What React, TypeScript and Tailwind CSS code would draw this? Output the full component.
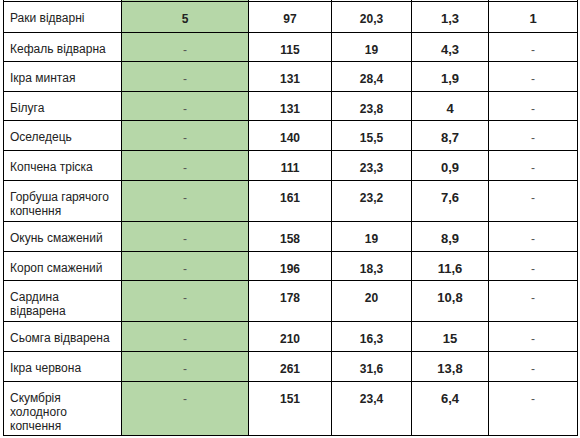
import React from "react";

type Row = {
  name: string[];
  g: string;
  kcal: string;
  protein: string;
  fat: string;
  carbs: string;
  h: string;
};

const ROWS: Row[] = [
  { name: ["Раки відварні"], g: "5", kcal: "97", protein: "20,3", fat: "1,3", carbs: "1", h: "h-[31px]" },
  { name: ["Кефаль відварна"], g: "-", kcal: "115", protein: "19", fat: "4,3", carbs: "-", h: "h-[29px]" },
  { name: ["Ікра минтая"], g: "-", kcal: "131", protein: "28,4", fat: "1,9", carbs: "-", h: "h-[30px]" },
  { name: ["Білуга"], g: "-", kcal: "131", protein: "23,8", fat: "4", carbs: "-", h: "h-[29px]" },
  { name: ["Оселедець"], g: "-", kcal: "140", protein: "15,5", fat: "8,7", carbs: "-", h: "h-[30px]" },
  { name: ["Копчена тріска"], g: "-", kcal: "111", protein: "23,3", fat: "0,9", carbs: "-", h: "h-[30px]" },
  { name: ["Горбуша гарячого", "копчення"], g: "-", kcal: "161", protein: "23,2", fat: "7,6", carbs: "-", h: "h-[41px]" },
  { name: ["Окунь смажений"], g: "-", kcal: "158", protein: "19", fat: "8,9", carbs: "-", h: "h-[30px]" },
  { name: ["Короп смажений"], g: "-", kcal: "196", protein: "18,3", fat: "11,6", carbs: "-", h: "h-[29px]" },
  { name: ["Сардина", "відварена"], g: "-", kcal: "178", protein: "20", fat: "10,8", carbs: "-", h: "h-[41px]" },
  { name: ["Сьомга відварена"], g: "-", kcal: "210", protein: "16,3", fat: "15", carbs: "-", h: "h-[30px]" },
  { name: ["Ікра червона"], g: "-", kcal: "261", protein: "31,6", fat: "13,8", carbs: "-", h: "h-[30px]" },
  { name: ["Скумбрія", "холодного", "копчення"], g: "-", kcal: "151", protein: "23,4", fat: "6,4", carbs: "-", h: "h-[55px]" },
];

const GRID = "grid grid-cols-[118px_127px_83px_80px_77px_90px]";
const CELL = "border-l border-black pt-[9px] leading-[13px]";

function Value({ value, big }: { value: string; big?: boolean }) {
  if (value === "-") {
    return <span className="text-[12px] font-normal text-[#555]">-</span>;
  }
  return <span className={big ? "text-[13px] font-bold" : "text-[12px] font-bold"}>{value}</span>;
}

export default function App() {
  return (
    <div className="bg-white w-[580px] h-[438px] overflow-hidden font-['Liberation_Sans',Arial,sans-serif] text-[#222]">
      <div className="ml-[3px] w-[575px]">
        {/* bottom edge of the cut-off header row */}
        <div className={`${GRID} h-[1px]`}>
          <div className="border-l border-black" />
          <div className="border-l border-black bg-[#b6d7a8]" />
          <div className="border-l border-black" />
          <div className="border-l border-black" />
          <div className="border-l border-black" />
          <div className="border-l border-r border-black" />
        </div>
        {ROWS.map((row, i) => (
          <div
            key={row.name.join(" ")}
            className={`${GRID} ${row.h} border-t border-black ${i === ROWS.length - 1 ? "border-b" : ""}`}
          >
            <div className="border-l border-black pt-[9px] pl-[6px] text-[12px] leading-[14px]">
              {row.name.map((line) => (
                <div key={line}>{line}</div>
              ))}
            </div>
            <div className={`${CELL} bg-[#b6d7a8] text-center`}>
              <Value value={row.g} />
            </div>
            <div className={`${CELL} text-center`}>
              <Value value={row.kcal} />
            </div>
            <div className={`${CELL} text-center`}>
              <Value value={row.protein} />
            </div>
            <div className={`${CELL} text-center`}>
              <Value value={row.fat} big />
            </div>
            <div className={`${CELL} border-r text-center`}>
              <Value value={row.carbs} big />
            </div>
          </div>
        ))}
      </div>
    </div>
  );
}
